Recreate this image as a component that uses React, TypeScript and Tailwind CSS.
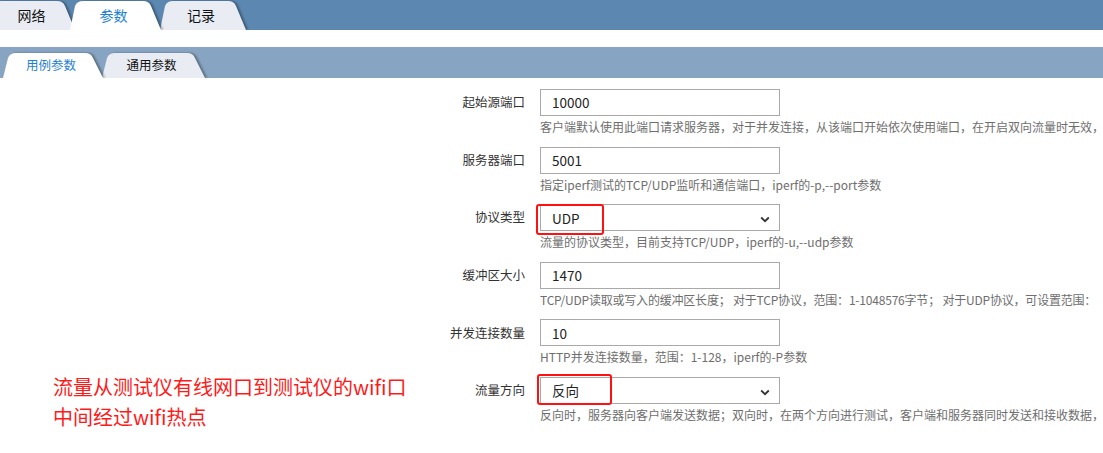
import type { ReactNode } from "react";

const font = { fontFamily: '"Noto Sans CJK SC", "Liberation Sans", sans-serif' };

// 标签页形状：左上圆角，右侧斜边
function Tab({
  label,
  width,
  height,
  active,
  small,
  className,
}: {
  label: string;
  width: number;
  height: number;
  active?: boolean;
  small?: boolean;
  className?: string;
}) {
  const w = width;
  const h = height;
  const d = `M0,${h} L5,5 Q7,0 13,0 L${w - 20},0 Q${w - 14},0 ${w - 12},5 L${w - 2},${h} Z`;
  return (
    <div
      className={`relative flex items-center justify-center shrink-0 ${active ? "z-10" : ""} ${className ?? ""}`}
      style={{ width: w, height: h }}
    >
      <svg
        width={w}
        height={h}
        className="absolute inset-0 [filter:drop-shadow(2px_0_1px_rgba(0,0,0,0.35))]"
      >
        <path d={d} fill={active ? "#ffffff" : "#e9edf3"} />
      </svg>
      <span
        className={`relative pr-[6px] ${small ? "text-[12.5px]" : "text-[14px]"} ${
          active ? "text-[#1f7fd1]" : "text-[#111]"
        }`}
      >
        {label}
      </span>
    </div>
  );
}

function Chevron() {
  return (
    <svg width="10" height="7" viewBox="0 0 10 7" className="absolute right-[9px] top-[11px]">
      <path d="M1.2 1.5 L5 5.2 L8.8 1.5" fill="none" stroke="#333" strokeWidth="1.8" />
    </svg>
  );
}

function Row({
  label,
  value,
  select,
  help,
  tight,
  mark,
}: {
  label: string;
  value: string;
  select?: boolean;
  help: string;
  tight?: boolean;
  mark?: ReactNode;
}) {
  return (
    <div className="flex h-[45px]">
      <div className="w-[525px] h-[27px] flex items-center justify-end text-[12.5px] text-[#333] shrink-0">
        {label}
      </div>
      <div className="ml-[15px] flex flex-col">
        <div className="relative w-[240px] h-[27px] border border-[#a9a9a9] bg-white flex items-center pl-[11px] text-[13.5px] text-[#222]">
          {value}
          {select && <Chevron />}
          {mark}
        </div>
        <div
          className={`mt-[4px] h-[14px] leading-[14px] text-[12px] text-[#6e6e6e] whitespace-nowrap ${
            tight ? "tracking-[-0.2px]" : ""
          }`}
        >
          {help}
        </div>
      </div>
    </div>
  );
}

export default function App() {
  return (
    <div className="relative w-full h-[453px] overflow-hidden bg-white" style={font}>
      {/* 顶部主标签栏 */}
      <div className="h-[30px] bg-[#5b87b0] flex items-end overflow-hidden">
        <Tab label="网络" width={89} height={29} className="-ml-[12px] pl-[4px]" />
        <Tab label="参数" width={93} height={29} active className="-ml-[7px]" />
        <Tab label="记录" width={88} height={29} className="-ml-[3px]" />
      </div>

      {/* 二级标签栏 */}
      <div className="mt-[17px] h-[31px] bg-[#87a4c2] flex items-end overflow-hidden">
        <Tab label="用例参数" width={102} height={25} active small className="ml-[3px]" />
        <Tab label="通用参数" width={105} height={25} small className="-ml-[3px]" />
      </div>

      {/* 表单 */}
      <div className="mt-[11px] flex flex-col gap-[12.6px]">
        <Row
          label="起始源端口"
          value="10000"
          help="客户端默认使用此端口请求服务器，对于并发连接，从该端口开始依次使用端口，在开启双向流量时无效，"
        />
        <Row
          label="服务器端口"
          value="5001"
          help="指定iperf测试的TCP/UDP监听和通信端口，iperf的-p,--port参数"
        />
        <Row
          label="协议类型"
          value="UDP"
          select
          help="流量的协议类型，目前支持TCP/UDP，iperf的-u,--udp参数"
          mark={
            <div className="absolute -left-[5px] -top-[1px] w-[68px] h-[31px] border-2 border-[#ff1111] rounded-[3px]" />
          }
        />
        <Row
          label="缓冲区大小"
          value="1470"
          tight
          help="TCP/UDP读取或写入的缓冲区长度； 对于TCP协议，范围：1-1048576字节； 对于UDP协议，可设置范围："
        />
        <Row
          label="并发连接数量"
          value="10"
          help="HTTP并发连接数量，范围：1-128，iperf的-P参数"
        />
        <Row
          label="流量方向"
          value="反向"
          select
          help="反向时，服务器向客户端发送数据；双向时，在两个方向进行测试，客户端和服务器同时发送和接收数据，"
          mark={
            <div className="absolute -left-[4px] -top-[4px] w-[75px] h-[31px] border-2 border-[#ff1111] rounded-[3px]" />
          }
        />
      </div>

      {/* 红色批注 */}
      <div className="absolute left-[53px] top-[372px] text-[20px] leading-[30px] text-[#ff1a1a]">
        <div>流量从测试仪有线网口到测试仪的wifi口</div>
        <div>中间经过wifi热点</div>
      </div>
    </div>
  );
}
